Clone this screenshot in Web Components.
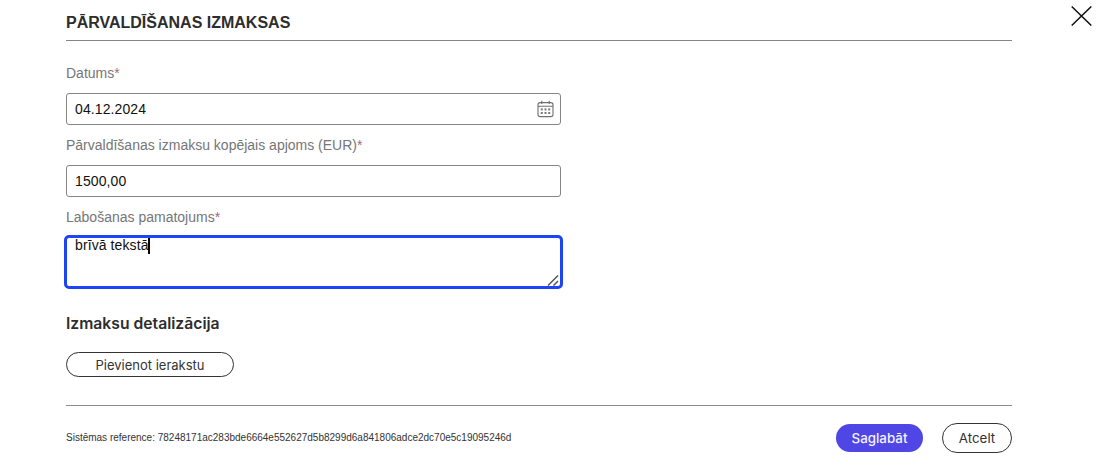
<!DOCTYPE html>
<html lang="lv">
<head>
<meta charset="utf-8">
<title>Pārvaldīšanas izmaksas</title>
<style>
html,body{margin:0;padding:0;background:#fff}
body{font-family:"Liberation Sans",Arial,sans-serif;width:1101px;height:473px;overflow:hidden}
</style>
</head>
<body>
<cost-dialog>
  <span slot="title">PĀRVALDĪŠANAS IZMAKSAS</span>
  <form-field label="Datums">
    <text-box value="04.12.2024"><calendar-icon slot="icon"></calendar-icon></text-box>
  </form-field>
  <form-field label="Pārvaldīšanas izmaksu kopējais apjoms (EUR)">
    <text-box value="1500,00"></text-box>
  </form-field>
  <form-field label="Labošanas pamatojums">
    <text-area-box>brīvā tekstā</text-area-box>
  </form-field>
  <section-title>Izmaksu detalizācija</section-title>
  <pill-button kind="add">Pievienot ierakstu</pill-button>
  <span slot="ref">Sistēmas reference: 78248171ac283bde6664e552627d5b8299d6a841806adce2dc70e5c19095246d</span>
  <pill-button slot="actions" kind="primary">Saglabāt</pill-button>
  <pill-button slot="actions" kind="cancel">Atcelt</pill-button>
</cost-dialog>
<script>
function def(name, html){
  customElements.define(name, class extends HTMLElement{
    constructor(){super();this.attachShadow({mode:'open'}).innerHTML=typeof html==='function'?html(this):html;}
  });
}
def('cost-dialog',`<style>
:host{display:block;position:relative;box-sizing:border-box;width:1101px;height:473px;padding:0 89px 0 66px}
header{box-sizing:border-box;border-bottom:1px solid #858585;height:41px;padding-top:14px;font:700 16px/18px "Liberation Sans",Arial,sans-serif;color:#2d2d2d}
.body{height:364px;box-sizing:border-box;padding-top:22px}
footer{border-top:1px solid #8c8c8c;display:flex;align-items:center;justify-content:space-between;padding-top:17px}
.ref{font:10px/12px "Liberation Sans",Arial,sans-serif;color:#333}
.actions{display:flex;gap:19px;align-items:center}
.close{position:absolute;left:1071px;top:6px;width:21px;height:20px;display:block}
</style>
<header><slot name="title"></slot></header>
<div class="body"><slot></slot></div>
<footer><div class="ref"><slot name="ref"></slot></div><div class="actions"><slot name="actions"></slot></div></footer>
<svg class="close" viewBox="0 0 21 20" fill="none" stroke="#111" stroke-width="1.5"><path d="M.7.5 20.3 19.5M20.3.5.7 19.5"/></svg>`);

def('form-field',h=>`<style>
:host{display:block;width:495px}
label{display:block;height:20px;font:14px/20px "Liberation Sans",Arial,sans-serif;color:#767676;margin-bottom:10px}
b{font-weight:400;color:#a9667c}
</style>
<label>${h.getAttribute('label')}<b>*</b></label><slot></slot>`);

def('text-box',h=>`<style>
:host{display:block;margin-bottom:10px}
div{box-sizing:border-box;height:32px;border:1px solid #858585;border-radius:3px;display:flex;align-items:center;justify-content:space-between;padding:0 6px 0 8px;font:14px/20px "Liberation Sans",Arial,sans-serif;letter-spacing:.1px;color:#111;background:#fff}
</style><div><span>${h.getAttribute('value')}</span><slot name="icon"></slot></div>`);

def('calendar-icon',`<style>:host{display:block;width:17px;height:18px}svg{display:block}</style>
<svg width="17" height="18" viewBox="0 0 17 18" fill="none" stroke="#6f6f6f" stroke-width="1.1">
<rect x="1" y="2.6" width="15" height="14" rx="2.2"/><path d="M1 6.3h15M4.8.8v3.2M12.2.8v3.2"/>
<g fill="#7a7a7a" stroke="none"><rect x="3.8" y="8.4" width="2" height="2"/><rect x="7.5" y="8.4" width="2" height="2"/><rect x="11.2" y="8.4" width="2" height="2"/><rect x="3.8" y="12" width="2" height="2"/><rect x="7.5" y="12" width="2" height="2"/><rect x="11.2" y="12" width="2" height="2"/></g></svg>`);

def('text-area-box',`<style>
:host{display:block;margin-top:-2px;margin-bottom:25px}
.t{position:relative;box-sizing:border-box;width:499px;margin-left:-2px;height:54px;border:3px solid #1d44f5;border-radius:5px;padding:0 8px;font:14px/14px "Liberation Sans",Arial,sans-serif;letter-spacing:.1px;color:#111;background:#fff}
.c{display:inline-block;width:2px;height:16px;background:#000;vertical-align:top;margin-left:-1px}
svg{position:absolute;right:1px;bottom:0;display:block}
</style><div class="t"><slot></slot><span class="c"></span>
<svg width="12" height="12" viewBox="0 0 12 12" fill="none" stroke="#555" stroke-width="1.5"><path d="M1 11.5 11 1.5M6.5 11.5 11 7"/></svg></div>`);

def('section-title',`<style>:host{display:block;font:600 15.7px/20px Inter,"Liberation Sans",sans-serif;color:#2d2d2d;margin-bottom:18px}</style><slot></slot>`);

def('pill-button',h=>{
 const k=h.getAttribute('kind');
 const s={add:'width:168px;height:25px;border:1px solid #333;background:#fff;color:#333;font-weight:400;font-size:13px',
 primary:'width:87px;height:28px;border:0;background:#4f46e5;color:#f4f3ff;font-weight:500;font-size:13.33px',
 cancel:'width:70px;height:30px;border:1px solid #333;background:#fff;color:#333;font-weight:400;font-size:13.33px'}[k];
 return `<style>:host{display:block}
 div{box-sizing:border-box;display:flex;align-items:center;justify-content:center;border-radius:15px;font-family:Inter,"Liberation Sans",sans-serif;line-height:18px;${s}}
 </style><div><slot></slot></div>`;
});
</script>
</body>
</html>
